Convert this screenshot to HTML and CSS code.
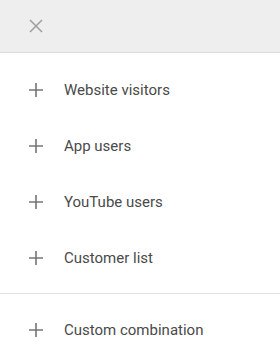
FILE: index.html
```html
<!DOCTYPE html>
<html>
<head>
<meta charset="utf-8">
<link rel="stylesheet" href="styles.css">
</head>
<body>
<div class="panel">
  <div class="header">
    <svg class="close" width="14" height="14" viewBox="0 0 14 14"><path d="M1 1L13 13M13 1L1 13" stroke="#9e9e9e" stroke-width="1.5" fill="none"/></svg>
  </div>
  <div class="group">
    <div class="item"><svg class="plus" width="14" height="14" viewBox="0 0 14 14"><path d="M7 0V14M0 7H14" stroke="#757575" stroke-width="1.6" fill="none"/></svg><span>Website visitors</span></div>
    <div class="item"><svg class="plus" width="14" height="14" viewBox="0 0 14 14"><path d="M7 0V14M0 7H14" stroke="#757575" stroke-width="1.6" fill="none"/></svg><span>App users</span></div>
    <div class="item"><svg class="plus" width="14" height="14" viewBox="0 0 14 14"><path d="M7 0V14M0 7H14" stroke="#757575" stroke-width="1.6" fill="none"/></svg><span>YouTube users</span></div>
    <div class="item"><svg class="plus" width="14" height="14" viewBox="0 0 14 14"><path d="M7 0V14M0 7H14" stroke="#757575" stroke-width="1.6" fill="none"/></svg><span>Customer list</span></div>
  </div>
  <div class="group sep">
    <div class="item"><svg class="plus" width="14" height="14" viewBox="0 0 14 14"><path d="M7 0V14M0 7H14" stroke="#757575" stroke-width="1.6" fill="none"/></svg><span>Custom combination</span></div>
  </div>
</div>
</body>
</html>
```

FILE: styles.css
```css
html, body {
  margin: 0;
  padding: 0;
  background: #fff;
}
.panel {
  width: 280px;
  height: 364px;
  font-family: Roboto, "Liberation Sans", sans-serif;
  font-size: 15px;
  color: #4a4a4a;
}
.header {
  height: 52px;
  background: #eeeeee;
  border-bottom: 1px solid #dcdcdc;
  display: flex;
  align-items: center;
  padding-left: 29px;
}
.close {
  display: block;
}
.group {
  padding: 9px 0 7px;
}
.sep {
  border-top: 1px solid #e0e0e0;
  padding-top: 8px;
}
.item {
  height: 56px;
  display: flex;
  align-items: center;
  padding-left: 29px;
}
.plus {
  display: block;
  flex: none;
  margin-right: 21px;
}
```
